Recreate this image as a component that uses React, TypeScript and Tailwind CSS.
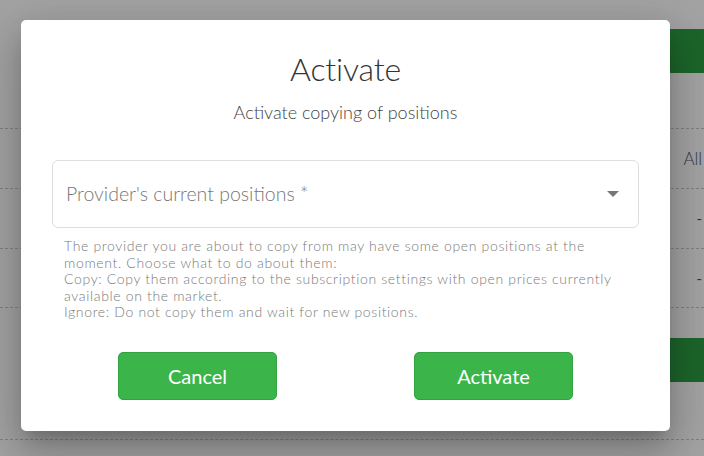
export default function App() {
  const font = { fontFamily: 'Lato, "Noto Sans", sans-serif' };
  return (
    <div className="relative w-[704px] h-[456px] overflow-hidden bg-white" style={font}>
      {/* background page */}
      <div className="flex flex-col pt-[29px]">
        <div className="flex justify-end h-[44px]">
          <div className="w-[40px] h-[44px] rounded-l-[5px] bg-[#2e9e44]" />
        </div>
        <div className="h-[56px] border-b border-dashed border-[#c8c8c8]" />
        <div className="flex items-center justify-end h-[60px] border-b border-dashed border-[#c8c8c8] pr-[2px] text-[17px] font-light text-[#555]">All</div>
        <div className="flex items-center justify-end h-[60px] border-b border-dashed border-[#c8c8c8] pr-[2px] text-[15px] text-[#555]">-</div>
        <div className="flex items-center justify-end h-[59px] border-b border-dashed border-[#c8c8c8] pr-[2px] text-[15px] text-[#555]">-</div>
        <div className="flex justify-end mt-[30px] h-[44px]">
          <div className="w-[40px] h-[44px] rounded-l-[5px] bg-[#2e9e44]" />
        </div>
        <div className="mt-[57px] border-b border-dashed border-[#c8c8c8]" />
      </div>
      {/* overlay */}
      <div className="absolute inset-0 bg-[rgba(0,0,0,0.36)]" />
      {/* dialog */}
      <div className="absolute left-[21px] top-[20px] w-[649px] h-[411px] rounded-[5px] bg-white shadow-[0_11px_15px_-7px_rgba(0,0,0,0.2),0_24px_38px_3px_rgba(0,0,0,0.14),0_9px_46px_8px_rgba(0,0,0,0.12)] flex flex-col items-center">
        <h2 className="mt-[31px] text-[32px] leading-[36px] font-light text-[#333] tracking-[-0.2px]">Activate</h2>
        <p className="mt-[13px] text-[18px] leading-[24px] font-light text-[#444]">Activate copying of positions</p>
        <div className="self-stretch mx-[31px] mt-[36px] h-[68px] rounded-[6px] border border-[#dedede] flex items-center justify-between pl-[13px] pr-[19px]">
          <span className="text-[19.5px] font-light text-[#777]">Provider's current positions *</span>
          <svg width="12" height="6" viewBox="0 0 12 6"><path d="M0 0h12L6 6z" fill="#777" /></svg>
        </div>
        <div className="self-stretch pl-[43px] pr-[40px] mt-[10px] text-[14px] leading-[16.5px] font-light tracking-[0.65px] text-[#7a7a7a]">
          The provider you are about to copy from may have some open positions at the moment. Choose what to do about them:
          <br />Copy: Copy them according to the subscription settings with open prices currently available on the market.
          <br />Ignore: Do not copy them and wait for new positions.
        </div>
        <div className="self-stretch flex justify-between px-[97px] mt-[31px]">
          <button className="w-[159px] h-[48px] rounded-[5px] bg-[#3bb54a] border border-[#32a341] text-white text-[20px]">Cancel</button>
          <button className="w-[159px] h-[48px] rounded-[5px] bg-[#3bb54a] border border-[#32a341] text-white text-[20px]">Activate</button>
        </div>
      </div>
    </div>
  );
}
